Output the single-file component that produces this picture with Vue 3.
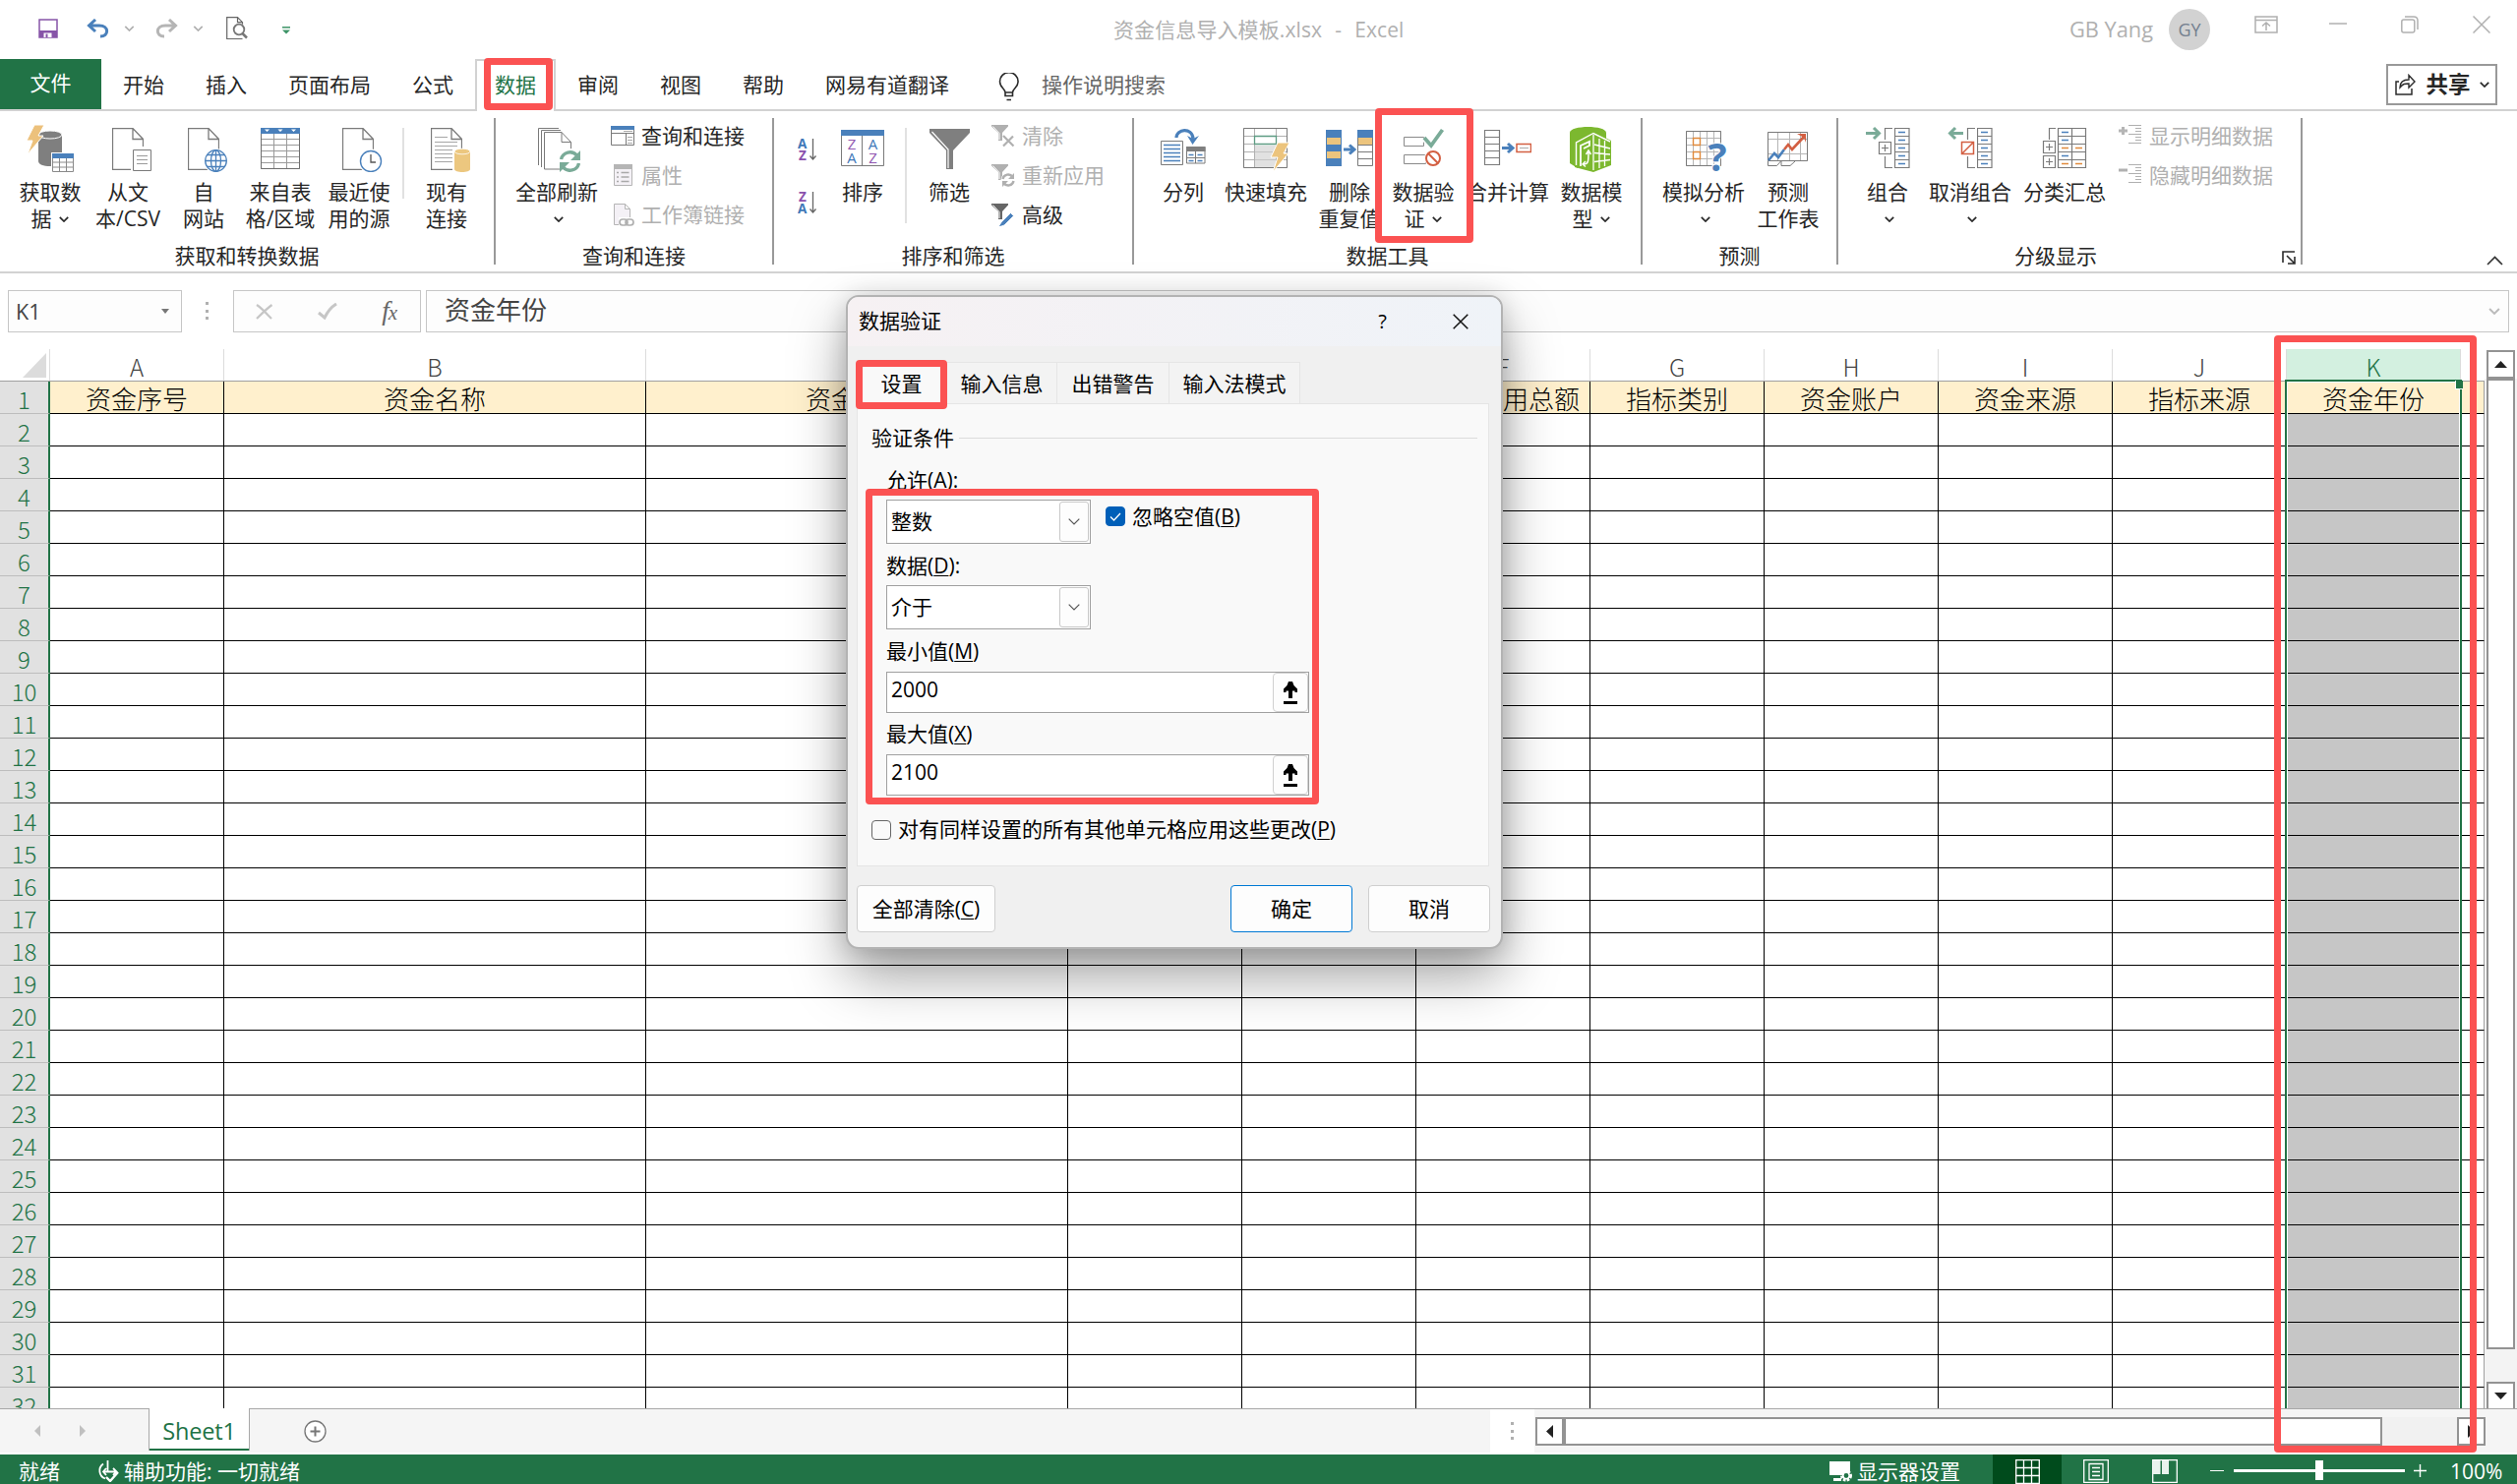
<script setup>
import { ref } from 'vue';

const tabs = ['开始', '插入', '页面布局', '公式', '数据', '审阅', '视图', '帮助', '网易有道翻译'];
const activeTab = ref('数据');

// 功能区：w 为按钮宽度，ml 为左间距
const groups = [
    {
        name: '获取和转换数据', w: 504,
        items: [
            { icon: 'getdata', lines: ['获取数', '据'], arrow: 'inline', w: 78, ml: 12 },
            { icon: 'csv', lines: ['从文', '本/CSV'], w: 80 },
            { icon: 'web', lines: ['自', '网站'], w: 74 },
            { icon: 'range', lines: ['来自表', '格/区域'], w: 82 },
            { icon: 'recent', lines: ['最近使', '用的源'], w: 78 },
            { sep: true, ml: 5, h: 72 },
            { icon: 'conn', lines: ['现有', '连接'], w: 72, ml: 7 },
        ],
    },
    {
        name: '查询和连接', w: 283,
        items: [
            { icon: 'refresh', lines: ['全部刷新'], arrow: 'below', w: 84, ml: 20 },
            {
                list: [
                    { icon: 's-query', text: '查询和连接' },
                    { icon: 's-prop', text: '属性', off: true },
                    { icon: 's-link', text: '工作簿链接', off: true },
                ],
                ml: 13,
            },
        ],
    },
    {
        name: '排序和筛选', w: 366,
        items: [
            { az: true, ml: 24, w: 20 },
            { icon: 'sort', lines: ['排序'], w: 44, ml: 24 },
            { sep: true, ml: 21, h: 97 },
            { icon: 'filter', lines: ['筛选'], w: 46, ml: 20 },
            {
                list: [
                    { icon: 's-clear', text: '清除', off: true },
                    { icon: 's-reapply', text: '重新应用', off: true },
                    { icon: 's-adv', text: '高级' },
                ],
                ml: 20,
            },
        ],
    },
    {
        name: '数据工具', w: 517,
        items: [
            { icon: 'split', lines: ['分列'], w: 90, ml: 5 },
            { icon: 'flash', lines: ['快速填充'], w: 78 },
            { icon: 'dup', lines: ['删除', '重复值'], w: 84, ml: 4 },
            { icon: 'valid', lines: ['数据验', '证'], arrow: 'inline', w: 66 },
            { icon: 'merge', lines: ['合并计算'], w: 84, ml: 11 },
            { icon: 'model', lines: ['数据模', '型'], arrow: 'inline', w: 64, ml: 11 },
        ],
    },
    {
        name: '预测', w: 199,
        items: [
            { icon: 'whatif', lines: ['模拟分析'], arrow: 'below', w: 84, ml: 20 },
            { icon: 'forecast', lines: ['预测', '工作表'], w: 62, ml: 13 },
        ],
    },
    {
        name: '分级显示', w: 472, launcher: true,
        items: [
            { icon: 'group', lines: ['组合'], arrow: 'below', w: 44, ml: 28 },
            { icon: 'ungroup', lines: ['取消组合'], arrow: 'below', w: 84, ml: 20 },
            { icon: 'subtotal', lines: ['分类汇总'], w: 84, ml: 12 },
            {
                list: [
                    { icon: 's-show', text: '显示明细数据', off: true },
                    { icon: 's-hide', text: '隐藏明细数据', off: true },
                ],
                ml: 13,
            },
        ],
    },
];

// 表格列
const columns = [
    { key: 'A', title: '资金序号', w: 177 },
    { key: 'B', title: '资金名称', w: 429 },
    { key: 'C', title: '资金性质', w: 429 },
    { key: 'D', title: '', w: 177 },
    { key: 'E', title: '', w: 177 },
    { key: 'F', title: '指标可用总额', w: 177 },
    { key: 'G', title: '指标类别', w: 177 },
    { key: 'H', title: '资金账户', w: 177 },
    { key: 'I', title: '资金来源', w: 177 },
    { key: 'J', title: '指标来源', w: 177 },
    { key: 'K', title: '资金年份', w: 177 },
    { key: '', title: '', w: 24 },
];
const selected = ref('K');
const rowCount = 32;

// 对话框
const dialogTabs = [
    { name: '设置', w: 92 },
    { name: '输入信息', w: 112 },
    { name: '出错警告', w: 114 },
    { name: '输入法模式', w: 133 },
];
const minValue = ref('2000');
const maxValue = ref('2100');
</script>

<template>
    <div class="excel">
        <!-- 图标定义 -->
        <svg class="defs" width="0" height="0">
            <symbol id="chev" viewBox="0 0 10 6"><path d="M.8.8 5 5 9.2.8" fill="none" stroke="currentColor" stroke-width="1.7" /></symbol>
            <symbol id="page" viewBox="0 0 32 43"><path d="M.5.5H21L31.500 11.500V42.500H.5ZM21 .5V11.500H31.500" fill="#fff" stroke="#7a7a7a" stroke-width="1.300" /></symbol>
            <symbol id="getdata" viewBox="0 0 48 48">
                <path d="M12 10v27c0 3 5 5 12 5s12-2 12-5V10z" fill="#7f7f7f" />
                <ellipse cx="24" cy="10" rx="12" ry="4" fill="#7f7f7f" stroke="#fff" stroke-width="1" />
                <path d="M8 0h10l-6 11h5L1 30l5-14H0z" fill="#ecc17c" stroke="#fff" stroke-width="1" />
                <path d="M25 28h23v20H25z" fill="#fff" />
                <path d="M26.500 29.500h21v18h-21zM26.500 38h21M26.500 43h21M33.500 33v14M40.500 33v14" fill="none" stroke="#8a8a8a" />
                <path d="M26 29h22v5H26z" fill="#4a80bb" />
            </symbol>
            <symbol id="csv" viewBox="0 0 48 48">
                <use href="#page" x="8" y="3" width="32" height="43" />
                <path d="M27 22h21v26H27z" fill="#fff" />
                <path d="M29.500 25.500h18v21h-18z" fill="#fff" stroke="#7a7a7a" />
                <path d="M33 31.500h11M33 35.500h11M33 39.500h11" stroke="#9a9a9a" />
            </symbol>
            <symbol id="web" viewBox="0 0 48 48">
                <use href="#page" x="8" y="3" width="32" height="43" />
                <circle cx="36.500" cy="36.500" r="12.500" fill="#fff" />
                <g fill="none" stroke="#4a80bb" stroke-width="1.300">
                    <circle cx="36.500" cy="36.500" r="10.800" />
                    <ellipse cx="36.500" cy="36.500" rx="5" ry="10.800" />
                    <path d="M25.700 36.500h21.600M36.500 26v21M28 30.500h17M28 42.500h17" />
                </g>
            </symbol>
            <symbol id="range" viewBox="0 0 48 48">
                <path d="M4.500 3.500h39v41h-39zM4 14.500h40M4 20.500h40M4 26.500h40M4 32.500h40M4 38.500h40M17.500 8v37M30.500 8v37" fill="#fff" stroke="#9a9a9a" />
                <path d="M4.500 8v36.500h39V8" fill="none" stroke="#6f6f6f" />
                <path d="M4 3h40v6H4z" fill="#4a80bb" />
                <path d="M8 4.500h5L10.500 7zM21.500 4.500h5L24 7zM35 4.500h5L37.500 7z" fill="#fff" />
            </symbol>
            <symbol id="recent" viewBox="0 0 48 48">
                <use href="#page" x="7" y="3" width="32" height="43" />
                <circle cx="36" cy="37" r="12.500" fill="#fff" />
                <circle cx="36" cy="37" r="10.500" fill="#fff" stroke="#4a80bb" stroke-width="1.400" />
                <path d="M36 30v8h5" fill="none" stroke="#555" stroke-width="1.300" />
            </symbol>
            <symbol id="conn" viewBox="0 0 48 48">
                <use href="#page" x="8" y="3" width="32" height="43" />
                <path d="M12 12.500h13M12 17.500h23M12 21.500h23M12 25.500h19M12 29.500h18M12 33.500h18M12 37.500h18" stroke="#a6a6a6" />
                <path d="M30 24h18v24H30z" fill="#fff" />
                <path d="M32 27v18c0 4 16 4 16 0V27z" fill="#ecc77f" />
                <ellipse cx="40" cy="27" rx="8" ry="2.800" fill="#ecc77f" stroke="#fff" stroke-width=".8" />
            </symbol>
            <symbol id="refresh" viewBox="0 0 48 48">
                <path d="M5.500 41V3.500H26M8.500 43V5.500H28" fill="none" stroke="#7a7a7a" />
                <path d="M11.500 7.500H29L38.500 17.500V45H11.500ZM29 7.500V17.500H38.500" fill="#fff" stroke="#7a7a7a" />
                <circle cx="37.500" cy="37" r="13" fill="#fff" />
                <path d="M28.500 35a9.200 9.200 0 0 1 16-4M46.500 39a9.200 9.200 0 0 1-16 4" fill="none" stroke="#7aab98" stroke-width="3.400" />
                <path d="M48 26v10H38zM27 48V38h10z" fill="#7aab98" />
            </symbol>
            <symbol id="sort" viewBox="0 0 48 48">
                <path d="M2.500 6.500h43v35h-43zM23.500 8v34" fill="#fff" stroke="#7a7a7a" />
                <path d="M2 5h44v6H2z" fill="#4a80bb" />
                <g font-family="Open Sans, sans-serif" font-size="15" text-anchor="middle">
                    <text x="13" y="25" fill="#9159b1">Z</text><text x="13" y="38.500" fill="#3f78b8">A</text>
                    <text x="34.500" y="25" fill="#3f78b8">A</text><text x="34.500" y="38.500" fill="#9159b1">Z</text>
                </g>
            </symbol>
            <symbol id="az" viewBox="0 0 20 24">
                <g font-family="Open Sans, sans-serif" font-size="13.500" font-weight="700"><text x="0" y="10.500" fill="#3f78b8">A</text><text x="1" y="23" fill="#8a51ad">Z</text></g>
                <path d="M15.500 1v21M12.500 18.500l3 3.500 3-3.500" fill="none" stroke="#666" stroke-width="1.300" />
            </symbol>
            <symbol id="za" viewBox="0 0 20 24">
                <g font-family="Open Sans, sans-serif" font-size="13.500" font-weight="700"><text x="1" y="10.500" fill="#8a51ad">Z</text><text x="0" y="23" fill="#3f78b8">A</text></g>
                <path d="M15.500 1v21M12.500 18.500l3 3.500 3-3.500" fill="none" stroke="#666" stroke-width="1.300" />
            </symbol>
            <symbol id="filter" viewBox="0 0 48 48">
                <path d="M4 4h41v4L28 26v19h-7V26L4 8z" fill="#7f7f7f" />
                <path d="M6.500 7 23 25v19" fill="none" stroke="#fff" stroke-width="1.200" />
            </symbol>
            <symbol id="split" viewBox="0 0 48 48">
                <path d="M1.500 16.500h22v24h-22z" fill="#fff" stroke="#7a7a7a" />
                <path d="M4 20.500h17M4 24.500h17M4 28.500h17M4 32.500h17M4 36.500h17" stroke="#4a80bb" stroke-width="1.300" />
                <path d="M27.500 22.500h18.500v16.500h-18.500zM36.500 27v12M28 33.500h18" fill="#fff" stroke="#7a7a7a" />
                <path d="M27 22h19.500v5H27z" fill="#7f7f7f" />
                <path d="M29.500 30.500h5M38.500 30.500h5M29.500 36.500h5M38.500 36.500h5" stroke="#4a80bb" stroke-width="1.300" />
                <path d="M17 13c0-9 16-11 17 1" fill="none" stroke="#4a80bb" stroke-width="3.200" />
                <path d="M28 11l5.500 9L40 11l-6 3z" fill="#4a80bb" />
            </symbol>
            <symbol id="flash" viewBox="0 0 48 48">
                <path d="M1.500 3.500h44v40h-44zM1 11.500h44M1 19.500h44M1 27.500h44M1 35.500h44M12.500 3v40M34.500 3v40" fill="#fff" stroke="#b0b0b0" />
                <path d="M13 21h21v22H13z" fill="#e1e1e1" /><path d="M13 27.500h21M13 35.500h21" stroke="#c4c4c4" />
                <path d="M1.500 3.500h44v40h-44z" fill="none" stroke="#7a7a7a" />
                <path d="M12.500 11.500h22v8h-22z" fill="#fff" stroke="#5d9c83" stroke-width="1.300" />
                <path d="M36 18h12l-6 11h5L31 48l5-15h-7z" fill="#ecc47d" stroke="#fff" />
            </symbol>
            <symbol id="dup" viewBox="0 0 48 48">
                <path d="M0 5h16v37H0z" fill="#4a80bb" /><path d="M1 13h14v7H1zM1 27h14v7H1z" fill="#ecc47d" />
                <path d="M32.500 12.500h15v29h-15zM32 20.500h16M32 27.500h16M32 34.500h16" fill="#fff" stroke="#7a7a7a" />
                <path d="M32 5h16v8H32z" fill="#4a80bb" /><path d="M33 13h14v7H33z" fill="#ecc47d" />
                <path d="M18 25h10M24 20.500l5 4.500-5 4.500" fill="none" stroke="#4a80bb" stroke-width="3" />
            </symbol>
            <symbol id="valid" viewBox="0 0 48 48">
                <path d="M4.500 12.500h20v9h-20zM4.500 30.500h22v9h-22z" fill="#fff" stroke="#8a8a8a" />
                <path d="M25 13l7 8L43.500 5" fill="none" stroke="#fff" stroke-width="7" />
                <path d="M25 13l7 8L43.500 5" fill="none" stroke="#7aab98" stroke-width="3.800" />
                <circle cx="34" cy="34" r="9" fill="#fff" />
                <circle cx="34" cy="34" r="7" fill="none" stroke="#d35f42" stroke-width="2" />
                <path d="M29 29l10 10" stroke="#d35f42" stroke-width="2" />
            </symbol>
            <symbol id="merge" viewBox="0 0 48 48">
                <path d="M.5 5.500h15v35H.5zM0 12.500h16M0 19.500h16M0 26.500h16M0 33.500h16" fill="#fff" stroke="#7a7a7a" stroke-width="1.200" />
                <path d="M18 23.500h10M24 19l5 4.500-5 4.500" fill="none" stroke="#4a80bb" stroke-width="3" />
                <path d="M33 19.500h14.500v8H33z" fill="#fff" stroke="#d35f42" stroke-width="1.500" /><path d="M36 23.500h9" stroke="#aaa" />
            </symbol>
            <symbol id="model" viewBox="0 0 48 48">
                <path d="M2 8c0-8 37-8 37 0v9H10v27l-8-5z" fill="#7cb82f" />
                <path d="M7 16 26 7l18 9v25l-18 7L7 43z" fill="#7cb82f" />
                <path d="M8.500 41V18L26 8.500l17 8.500" fill="none" stroke="#fff" stroke-width="1.400" />
                <path d="M26 10v36M27 20l16 4M27 28.500l16 1.500M27 37.500l16-2M32 14v30M37.500 16v26" fill="none" stroke="#fff" stroke-width="1.300" />
                <path d="M13 42V21l9-4v4l-6 3" fill="none" stroke="#fff" stroke-width="1.800" />
                <path d="M16 40c5 0 5-3 5-13M18.500 30l2.500-4 2.500 4M18 37l-3 3 3 2.500" fill="none" stroke="#fff" stroke-width="1.500" />
            </symbol>
            <symbol id="whatif" viewBox="0 0 48 48">
                <path d="M6.500 6.500h35v35h-35zM13.500 6v35M20.500 6v35M27.500 6v35M34.500 6v35M6 13.500h35M6 20.500h35M6 27.500h35M6 34.500h35" fill="#fff" stroke="#b5b5b5" />
                <path d="M6.500 6.500h35v35h-35z" fill="none" stroke="#7a7a7a" />
                <path d="M13.500 13.500h7v7h-7zM13.500 27.500h7v7h-7z" fill="#fff" stroke="#e08a3c" stroke-width="1.400" />
                <text x="38" y="47" text-anchor="middle" font-family="Open Sans, sans-serif" font-size="40" font-weight="700" fill="#4a80bb" stroke="#fff" stroke-width="2" paint-order="stroke">?</text>
            </symbol>
            <symbol id="forecast" viewBox="0 0 48 48">
                <path d="M3.500 7.500h40v29h-40zM13.500 7v29M25.500 7v29M36.500 7v29M3 14.500h40M3 29.500h40" fill="#fff" stroke="#b5b5b5" />
                <path d="M3.500 7.500h40v29h-40zM3.500 37v4.500h9l4-4.500M17 37v4.500h9l5-4.500" fill="none" stroke="#7a7a7a" />
                <path d="M4 36l6-7 4 4 6-8" fill="none" stroke="#4a80bb" stroke-width="2.600" />
                <path d="M20 25l4-5 4 5L41 11" fill="none" stroke="#d35f42" stroke-width="2.600" /><path d="M33 9h9v9l-2-5z" fill="#d35f42" />
            </symbol>
            <symbol id="rows" viewBox="0 0 16 42">
                <path d="M.5.5h14.500v40H.5zM0 8.500h15M0 16.500h15M0 24.500h15M0 32.500h15" fill="#fff" stroke="#7a7a7a" stroke-width="1.200" />
                <path d="M4 4.500h7M4 12.500h7M4 20.500h7M4 28.500h7M4 36.500h7" stroke="#4a80bb" stroke-width="1.400" />
            </symbol>
            <symbol id="group" viewBox="0 0 48 48">
                <path d="M2 8.500h13M10 3l5.500 5.500L10 14" fill="none" stroke="#7aab98" stroke-width="3" />
                <path d="M29 3.500h-7.500V15M21.500 32v11.500H29M15.500 17.500h12v12h-12zM21.500 20v7M18 23.500h7" fill="none" stroke="#7a7a7a" stroke-width="1.200" />
                <use href="#rows" x="31" y="3" width="16" height="42" />
            </symbol>
            <symbol id="ungroup" viewBox="0 0 48 48">
                <path d="M17 8.500H4M9 3 3.500 8.500 9 14" fill="none" stroke="#7aab98" stroke-width="3" />
                <path d="M29 3.500h-7.500V15M21.500 32v11.500H29" fill="none" stroke="#7a7a7a" stroke-width="1.200" />
                <path d="M15.500 17.500h12v12h-12zM16 29l11-11" fill="none" stroke="#d35f42" stroke-width="1.500" />
                <use href="#rows" x="31" y="3" width="16" height="42" />
            </symbol>
            <symbol id="subtotal" viewBox="0 0 48 48">
                <path d="M15 3.500H8.500V15M2.500 16.500h12v12h-12zM8.500 19v7M5 22.500h7M2.500 31.500h12v12h-12zM8.500 34v7M5 37.500h7" fill="none" stroke="#7a7a7a" stroke-width="1.200" />
                <path d="M17.500 3.500h28v40h-28zM31.500 3v40M17 11.500h28M17 19.500h28M17 27.500h28M17 35.500h28" fill="#fff" stroke="#7a7a7a" stroke-width="1.200" />
                <path d="M21 7.500h7M21 15.500h7M21 31.500h7" stroke="#4a80bb" stroke-width="1.400" />
                <path d="M21 23.500h7M21 39.500h7M35 23.500h7M35 39.500h7" stroke="#e08a3c" stroke-width="1.400" />
            </symbol>
            <symbol id="s-query" viewBox="0 0 24 24">
                <path d="M.5 2.500h23v19H.5zM15.500 10v12M0 9.500h24" fill="#fff" stroke="#7a7a7a" /><path d="M17 13.500h5M17 16.500h5M17 19.500h5M13 7.500h9" stroke="#aaa" /><path d="M0 2h24v4H0z" fill="#4a80bb" />
            </symbol>
            <symbol id="s-prop" viewBox="0 0 24 24">
                <path d="M3.500 1.500h18v21h-18z" fill="#f4f1f6" stroke="#b5b5b5" /><path d="M3 1h19v5H3z" fill="#b5b5b5" /><path d="M6 9.500h2M6 14h2M6 18.500h2M10.500 9.500h8M10.500 14h8M10.500 18.500h8" stroke="#a9a9a9" stroke-width="1.600" />
            </symbol>
            <symbol id="s-link" viewBox="0 0 24 24">
                <path d="M3.500 1.500h11l5 5v16h-16zM14.500 1.500v5h5" fill="#f4f1f6" stroke="#b5b5b5" /><path d="M8 15h16v9H8z" fill="#fff" /><rect x="9" y="17" width="8" height="6" rx="3" fill="none" stroke="#b0b0b0" stroke-width="1.700" /><rect x="15" y="17" width="8" height="6" rx="3" fill="none" stroke="#b0b0b0" stroke-width="1.700" />
            </symbol>
            <symbol id="s-clear" viewBox="0 0 24 24">
                <path d="M0 1h17v1.500L11 9v8H7V9L0 2.500z" fill="#b0b0b0" /><path d="M1.500 2.500 8 9.500V16" stroke="#fff" fill="none" /><path d="m12 12 10.500 10.500M22 12.500 12 22.500" stroke="#b0b0b0" stroke-width="2.200" />
            </symbol>
            <symbol id="s-reapply" viewBox="0 0 24 24">
                <path d="M0 1h17v1.500L11 9v8H7V9L0 2.500z" fill="#b0b0b0" /><path d="M1.500 2.500 8 9.500V16" stroke="#fff" fill="none" /><circle cx="17" cy="17" r="7.500" fill="#fff" /><path d="M11.500 16a5.500 5.500 0 0 1 10-2M22.500 18a5.500 5.500 0 0 1-10 2" fill="none" stroke="#b0b0b0" stroke-width="2.400" /><path d="M23 10v6h-6zM11 24v-6h6z" fill="#b0b0b0" />
            </symbol>
            <symbol id="s-adv" viewBox="0 0 24 24">
                <path d="M0 1h17v1.500L11 9v8H7V9L0 2.500z" fill="#666" /><path d="M1.500 2.500 8 9.500V16" stroke="#fff" fill="none" /><path d="m10 20 9.500-9.500 3 3L13 23l-6 2z" fill="#4a80bb" stroke="#fff" stroke-width=".8" />
            </symbol>
            <symbol id="s-show" viewBox="0 0 24 24">
                <path d="M4.500 3v8M0 7h9" stroke="#b5b5b5" stroke-width="3" /><path d="M10 1.500h13M17 4.500h6M17 7.500h6M10 10.500h13M17 13.500h6M17 16.500h6M10 19.500h13" stroke="#b0b0b0" />
            </symbol>
            <symbol id="s-hide" viewBox="0 0 24 24">
                <path d="M0 7h9" stroke="#b0b0b0" stroke-width="3" /><path d="M10 1.500h13M17 4.500h6M17 7.500h6M10 10.500h13M17 13.500h6M17 16.500h6M10 19.500h13" stroke="#b0b0b0" />
            </symbol>
        </svg>

        <!-- 标题栏 -->
        <header class="titlebar">
            <div class="quick">
                <svg class="q-save" width="20" height="20" viewBox="0 0 20 20"><path d="M1 1h18v18H1z" fill="#fff" stroke="#8754a8" stroke-width="1.500" /><path d="M1 12h18v7H1z" fill="#8754a8" /><path d="M5.500 14.500h8V19h-8z" fill="#fff" /><path d="M7.500 15.500h2V19h-2z" fill="#8754a8" /></svg>
                <svg class="q-undo" width="23" height="20" viewBox="0 0 23 20"><path d="M9 1 2.500 7 9 13M3 7h10c10 0 10 11 1 11" fill="none" stroke="#4a80bb" stroke-width="3" /></svg>
                <svg class="q-chev grey" width="11" height="6"><use href="#chev" /></svg>
                <svg class="q-redo" width="23" height="20" viewBox="0 0 23 20"><path d="m14 1 6.500 6L14 13M20 7H10C0 7 0 18 9 18" fill="none" stroke="#b5b5b5" stroke-width="3" /></svg>
                <svg class="q-chev grey" width="11" height="6"><use href="#chev" /></svg>
                <svg class="q-prev" width="22" height="24" viewBox="0 0 22 24"><path d="M16.500 22.500H.7V.7h10.800l5 5v2M11.500.7v5h5" fill="none" stroke="#666" stroke-width="1.200" /><circle cx="13" cy="13" r="5.300" fill="#fff" stroke="#777" stroke-width="1.800" /><path d="m16.500 17 4.500 4.500" stroke="#777" stroke-width="2.500" /></svg>
                <svg class="q-more" width="8" height="8" viewBox="0 0 8 8"><path d="M0 .8h8" stroke="#3d9467" stroke-width="1.500" /><path d="M0 3.500h8L4 7.500z" fill="#3d9467" /></svg>
            </div>
            <div class="doc-title">资金信息导入模板.xlsx&nbsp; -&nbsp; Excel</div>
            <div class="account">
                <span class="user">GB Yang</span>
                <span class="avatar">GY</span>
                <svg class="w-rib" width="24" height="18" viewBox="0 0 24 18"><path d="M1 1h22v16H1zM1 4.500h22M12 15V7M8 10.500 12 7l4 3.500" fill="none" stroke="#b0b0b0" stroke-width="1.500" /></svg>
                <svg class="w-min" width="18" height="18" viewBox="0 0 18 18"><path d="M0 8h18" stroke="#b0b0b0" stroke-width="1.500" /></svg>
                <svg class="w-max" width="18" height="18" viewBox="0 0 18 18"><rect x=".8" y="4" width="13" height="13" rx="2" fill="none" stroke="#b0b0b0" stroke-width="1.500" /><path d="M4 1h9q4 0 4 4v9" fill="none" stroke="#b0b0b0" stroke-width="1.500" /></svg>
                <svg class="w-close" width="18" height="18" viewBox="0 0 18 18"><path d="m.5.500 17 17m0-17-17 17" stroke="#b0b0b0" stroke-width="1.500" /></svg>
            </div>
        </header>

        <!-- 选项卡 -->
        <nav class="tabs">
            <div class="file">文件</div>
            <div v-for="t in tabs" :key="t" class="tab" :class="{ active: t === activeTab }">{{ t }}</div>
            <svg class="bulb" width="22" height="30" viewBox="0 0 22 30"><path d="M7 20c0-4-5.500-5-5.500-11a9.300 9.300 0 0 1 18.600 0c0 6-5.600 7-5.600 11v3.500H7zM7 20h7.500M8.500 27.500H13" fill="none" stroke="#2b2b2b" stroke-width="1.600" /></svg>
            <span class="tell">操作说明搜索</span>
            <div class="share">
                <svg width="22" height="22" viewBox="0 0 22 22"><path d="M4 8H1v13h16v-6" fill="none" stroke="#2b2b2b" stroke-width="1.500" /><path d="M5 14c0-6 4-8 9-8V1.500L20 8l-6 6v-4c-4 0-6 0-9 4z" fill="none" stroke="#2b2b2b" stroke-width="1.400" /></svg>
                <b>共享</b>
                <svg width="10" height="6"><use href="#chev" /></svg>
            </div>
        </nav>

        <!-- 功能区 -->
        <section class="ribbon">
            <div v-for="g in groups" :key="g.name" class="group" :style="{ width: g.w + 'px' }">
                <div class="group-body">
                    <template v-for="(it, i) in g.items" :key="i">
                        <div v-if="it.sep" class="thin" :style="{ marginLeft: it.ml + 'px', height: it.h + 'px' }"></div>
                        <div v-else-if="it.az" class="azcol" :style="{ marginLeft: it.ml + 'px', width: it.w + 'px' }">
                            <svg width="20" height="24"><use href="#az" /></svg>
                            <svg width="20" height="24"><use href="#za" /></svg>
                        </div>
                        <div v-else-if="it.list" class="list" :style="{ marginLeft: it.ml + 'px' }">
                            <div v-for="s in it.list" :key="s.text" class="small" :class="{ off: s.off }">
                                <svg width="24" height="24"><use :href="'#' + s.icon" /></svg>
                                <span>{{ s.text }}</span>
                            </div>
                        </div>
                        <div v-else class="big" :style="{ marginLeft: (it.ml || 0) + 'px', width: it.w + 'px' }">
                            <svg class="ico" width="48" height="48"><use :href="'#' + it.icon" /></svg>
                            <div v-for="(l, n) in it.lines" :key="n" class="line">
                                <span>{{ l }}</span>
                                <svg v-if="it.arrow === 'inline' && n === 1" class="arr" width="10" height="6"><use href="#chev" /></svg>
                            </div>
                            <div v-if="it.arrow === 'below'" class="line below"><svg width="10" height="6"><use href="#chev" /></svg></div>
                        </div>
                    </template>
                </div>
                <div class="group-name" :class="{ launch: g.launcher }">
                    {{ g.name }}
                    <svg v-if="g.launcher" class="launcher" width="14" height="14" viewBox="0 0 14 14"><path d="M1 12V1h12M5 5l7.500 7.500M13 6v7H6" fill="none" stroke="#2b2b2b" stroke-width="1.600" /></svg>
                </div>
            </div>
            <svg class="collapse" width="17" height="10" viewBox="0 0 17 10"><path d="m1 9 7.500-7.500L16 9" fill="none" stroke="#333" stroke-width="1.600" /></svg>
        </section>

        <!-- 编辑栏 -->
        <section class="formula">
            <div class="namebox"><span>K1</span><svg width="8" height="5" viewBox="0 0 8 5"><path d="M0 0h8L4 5z" fill="#777" /></svg></div>
            <div class="dots"><i></i><i></i><i></i></div>
            <div class="fxbox">
                <svg width="18" height="16" viewBox="0 0 18 16"><path d="M1 1c6 4 11 10 15 14M16.500 1C11 5 6 10 1 15" fill="none" stroke="#c6c6c6" stroke-width="2.200" /></svg>
                <svg width="20" height="17" viewBox="0 0 20 17"><path d="m1 10 6 5C10 9 14 4 19 1" fill="none" stroke="#c6c6c6" stroke-width="3" /></svg>
                <span class="fx">f<small>x</small></span>
            </div>
            <div class="fbar"><span>资金年份</span><svg width="12" height="7"><use href="#chev" /></svg></div>
        </section>

        <!-- 工作表 -->
        <section class="work">
            <div class="sheet">
                <div class="colheads">
                    <div class="corner"><svg width="24" height="25" viewBox="0 0 24 25"><path d="M24 0v25H0z" fill="#dcdcdc" /></svg></div>
                    <div v-for="c in columns" :key="c.key" class="colhead" :class="{ on: c.key === selected }" :style="{ width: c.w + 'px' }">{{ c.key }}</div>
                </div>
                <div v-for="r in rowCount" :key="r" class="row">
                    <div class="rowhead">{{ r }}</div>
                    <div v-for="c in columns" :key="c.key" class="cell" :class="{ head: r === 1, sel: c.key === selected && r > 1, last: !c.key }" :style="{ width: c.w + 'px' }">{{ r === 1 ? c.title : '' }}</div>
                </div>
                <div class="selection"><i></i></div>
            </div>
            <div class="vscroll">
                <div class="sbtn"><svg width="13" height="7" viewBox="0 0 13 7"><path d="M6.500 0 13 7H0z" fill="#222" /></svg></div>
                <div class="vthumb"></div>
                <div class="vtrack"></div>
                <div class="sbtn"><svg width="13" height="7" viewBox="0 0 13 7"><path d="M6.500 7 13 0H0z" fill="#222" /></svg></div>
            </div>
        </section>

        <!-- 工作表标签 -->
        <section class="sheetbar">
            <svg class="nav1" width="6" height="12" viewBox="0 0 6 12"><path d="M6 0v12L0 6z" fill="#c0c0c0" /></svg>
            <svg class="nav2" width="6" height="12" viewBox="0 0 6 12"><path d="M0 0v12l6-6z" fill="#c0c0c0" /></svg>
            <div class="stab">Sheet1</div>
            <svg class="plus" width="23" height="23" viewBox="0 0 23 23"><circle cx="11.500" cy="11.500" r="10.500" fill="#fff" stroke="#777" stroke-width="1.300" /><path d="M11.500 6.500v10M6.500 11.500h10" stroke="#777" stroke-width="2" /></svg>
            <div class="handle"><i></i><i></i><i></i></div>
            <div class="hscroll">
                <div class="hbtn"><svg width="7" height="13" viewBox="0 0 7 13"><path d="M7 0v13L0 6.500z" fill="#222" /></svg></div>
                <div class="hthumb"></div>
                <div class="htrack"></div>
                <div class="hbtn"><svg width="7" height="13" viewBox="0 0 7 13"><path d="M0 0v13l7-6.500z" fill="#222" /></svg></div>
            </div>
        </section>

        <!-- 状态栏 -->
        <footer class="status">
            <span class="ready">就绪</span>
            <svg class="acc" width="22" height="22" viewBox="0 0 22 22"><path d="M6 3.500a8.500 8.500 0 0 0 2 15M10.500 0v11M6 11.500h13M9 8l-3 3.500L9 15M16 8l3.500 3.500L16 15" fill="none" stroke="#fff" stroke-width="1.800" /><path d="m9 17 4 4 8-9" fill="none" stroke="#fff" stroke-width="2.400" /></svg>
            <span class="acc-text">辅助功能: 一切就绪</span>
            <svg class="disp" width="24" height="22" viewBox="0 0 24 22"><path d="M0 1h21v10l-6 4H0zM4 18h8v3H4z" fill="#fff" /><circle cx="17" cy="15.500" r="4.500" fill="none" stroke="#fff" stroke-width="3" stroke-dasharray="2.500 1.200" /><circle cx="17" cy="15.500" r="3.200" fill="#217346" stroke="#fff" stroke-width="1.600" /></svg>
            <span class="disp-text">显示器设置</span>
            <div class="view on"><svg width="25" height="25" viewBox="0 0 25 25"><path d="M.7.7h23.600v23.600H.7zM8.500 0v25M16.500 0v25M0 8.500h25M0 16.500h25" fill="none" stroke="#fff" stroke-width="1.300" /></svg></div>
            <div class="view"><svg width="26" height="24" viewBox="0 0 26 24"><path d="M.7.7h24.600v22.600H.7zM6 4.500h14v16H6zM9 8.500h8M9 12.500h8M9 16.500h8" fill="none" stroke="#fff" stroke-width="1.300" /></svg></div>
            <div class="view"><svg width="26" height="24" viewBox="0 0 26 24"><path d="M.7.7h24.600v22.600H.7z" fill="#217346" stroke="#fff" stroke-width="1.300" /><path d="M1 1h7.500v14H1zM10 1h7v14h-7z" fill="#e9f3ed" /></svg></div>
            <div class="zoom">
                <i class="minus"></i>
                <div class="track"><b></b></div>
                <svg width="13" height="13" viewBox="0 0 13 13"><path d="M6.500 0v13M0 6.500h13" stroke="#fff" stroke-width="1.400" /></svg>
            </div>
            <span class="pct">100%</span>
        </footer>

        <!-- 数据验证对话框 -->
        <div class="dialog">
            <div class="dlg-title">
                <span>数据验证</span>
                <span class="help">?</span>
                <svg width="16" height="16" viewBox="0 0 16 16"><path d="m.7.700 14.600 14.600m0-14.600L.7 15.300" stroke="#111" stroke-width="1.500" /></svg>
            </div>
            <div class="dlg-tabs">
                <div v-for="(t, i) in dialogTabs" :key="t.name" class="dlg-tab" :class="{ cur: i === 0 }" :style="{ width: t.w + 'px' }">{{ t.name }}</div>
            </div>
            <div class="panel">
                <div class="legend"><span>验证条件</span><hr /></div>
                <label class="lab lab-a">允许(<u>A</u>):</label>
                <div class="line-allow">
                    <div class="combo"><span>整数</span><div class="drop"><svg width="12" height="7" viewBox="0 0 12 7"><path d="m.700.7 5.300 5.300L11.300.7" fill="none" stroke="#555" stroke-width="1.200" /></svg></div></div>
                    <div class="check on"><svg width="12" height="9" viewBox="0 0 12 9"><path d="m1 4.500 3.500 3.500L11 1" fill="none" stroke="#fff" stroke-width="1.300" /></svg></div>
                    <span class="ignore">忽略空值(<u>B</u>)</span>
                </div>
                <label class="lab lab-d">数据(<u>D</u>):</label>
                <div class="combo"><span>介于</span><div class="drop"><svg width="12" height="7" viewBox="0 0 12 7"><path d="m.700.7 5.300 5.300L11.300.7" fill="none" stroke="#555" stroke-width="1.200" /></svg></div></div>
                <label class="lab lab-m">最小值(<u>M</u>)</label>
                <div class="input"><span>{{ minValue }}</span><div class="pick"><svg width="14" height="23" viewBox="0 0 14 23"><path d="M5 0h4l1.500 4L14 7.500V11h-2.500V9.500H9V17H5V9.500H2.500V11H0V7.500L3.500 4zM0 20h14v3H0z" /></svg></div></div>
                <label class="lab lab-x">最大值(<u>X</u>)</label>
                <div class="input"><span>{{ maxValue }}</span><div class="pick"><svg width="14" height="23" viewBox="0 0 14 23"><path d="M5 0h4l1.500 4L14 7.500V11h-2.500V9.500H9V17H5V9.500H2.500V11H0V7.500L3.500 4zM0 20h14v3H0z" /></svg></div></div>
                <div class="apply"><div class="check"></div><span>对有同样设置的所有其他单元格应用这些更改(<u>P</u>)</span></div>
            </div>
            <div class="dlg-btns">
                <button class="clear">全部清除(<u>C</u>)</button>
                <button class="ok">确定</button>
                <button>取消</button>
            </div>
        </div>

        <!-- 红色标注框 -->
        <div class="mark mark-tab"></div>
        <div class="mark mark-valid"></div>
        <div class="mark mark-setting"></div>
        <div class="mark mark-cond"></div>
        <div class="mark mark-col"></div>
    </div>
</template>

<style>
body {
    margin: 0;
    background: #fff;
}
</style>

<style scoped>
.excel {
    position: relative;
    width: 2559px;
    height: 1509px;
    overflow: hidden;
    display: flex;
    flex-direction: column;
    background: #fff;
    color: #262626;
    font: 21px/27px 'Open Sans', 'Noto Sans CJK SC', sans-serif;
    white-space: nowrap;
}

.excel * {
    box-sizing: border-box;
}

.excel svg {
    display: block;
    flex: none;
}

.excel .defs {
    display: none;
}

/* ===== 标题栏 ===== */
.titlebar {
    height: 60px;
    flex: none;
    display: flex;
    justify-content: space-between;
    color: #b0b0b0;
}

.quick {
    display: flex;
    align-items: center;
    width: 1132px;
    padding-left: 39px;
    height: 58px;
}

.grey {
    color: #b0b0b0;
}

.q-undo {
    margin-left: 29px;
}

.q-chev {
    margin-left: 15px;
}

.q-redo {
    margin-left: 21px;
}

.q-prev {
    margin-left: 23px;
}

.q-more {
    margin: 3px 0 0 35px;
}

.doc-title {
    flex: 1;
    line-height: 60px;
    font-size: 21px;
    letter-spacing: 0.1px;
    word-spacing: 1px;
}

.account {
    display: flex;
    height: 60px;
    align-items: center;
    padding-right: 27px;
}

.user {
    font-size: 21.8px;
    line-height: 60px;
}

.avatar {
    width: 42px;
    height: 42px;
    border-radius: 50%;
    background: #d2d2d2;
    color: #74808f;
    font-size: 18px;
    line-height: 42px;
    text-align: center;
    margin: 0 45px 0 16px;
}

.w-rib,
.w-min,
.w-max,
.w-close {
    margin-top: -10px;
}

.w-min {
    margin-left: 52px;
}

.w-max {
    margin-left: 55px;
}

.w-close {
    margin-left: 55px;
}

/* ===== 选项卡 ===== */
.tabs {
    height: 53px;
    flex: none;
    display: flex;
    align-items: center;
    box-shadow: inset 0 -2px #d2d2d2;
}

.file {
    width: 103px;
    height: 51px;
    line-height: 48px;
    margin-bottom: 2px;
    text-align: center;
    background: #217346;
    color: #fff;
}

.tab {
    height: 53px;
    line-height: 52px;
    padding: 0 21px;
}

.tab:nth-child(2) {
    margin-left: 1px;
}

.tab.active {
    color: #217346;
    background: #fff;
    padding: 0 18px;
    margin: 0 1px;
    border: solid #d2d2d2;
    border-width: 2px 2px 0;
    line-height: 48px;
}

.bulb {
    margin-left: 29px;
    margin-top: 4px;
}

.tell {
    margin-left: 22px;
    color: #666;
}

.share {
    margin: -2px 20px 0 auto;
    width: 113px;
    height: 42px;
    padding: 0 6px 0 7px;
    border: 2px solid #999;
    display: flex;
    align-items: center;
    justify-content: space-between;
    font-size: 22.5px;
}

/* ===== 功能区 ===== */
.ribbon {
    height: 165px;
    flex: none;
    display: flex;
    padding-top: 7px;
    border-bottom: 2px solid #d2d2d2;
}

.group {
    height: 149px;
    flex: none;
    border-right: 2px solid #999;
    display: flex;
    flex-direction: column;
}

.group-body {
    height: 127px;
    flex: none;
    display: flex;
    align-items: flex-start;
    padding-top: 7px;
}

.group-name {
    height: 22px;
    flex: none;
    text-align: center;
    line-height: 26px;
}

.group-name.launch {
    display: flex;
    justify-content: flex-end;
    align-items: flex-start;
    padding-right: 5px;
    gap: 188px;
}

.launcher {
    margin-top: 8px;
}

.big {
    flex: none;
    display: flex;
    flex-direction: column;
    align-items: center;
}

.ico {
    margin-bottom: 7px;
    overflow: visible;
}

.line {
    height: 27px;
    line-height: 27px;
    display: flex;
    align-items: center;
    justify-content: center;
}

.arr {
    margin-left: 7px;
    margin-right: 1px;
}

.line.below {
    padding-left: 3px;
}

.thin {
    width: 2px;
    flex: none;
    margin-top: 3px;
    background: #e1e1e1;
}

.azcol {
    display: flex;
    flex-direction: column;
    gap: 30px;
    padding-top: 13px;
}

.list {
    margin-top: -9px;
}

.small {
    height: 40px;
    display: flex;
    align-items: center;
    gap: 7px;
}

.small.off {
    color: #b0b0b0;
}

.collapse {
    margin: 140px 14px 0 auto;
}

/* ===== 编辑栏 ===== */
.formula {
    height: 77px;
    flex: none;
    display: flex;
    padding: 17px 8px 16px;
    color: #444;
}

.namebox {
    width: 177px;
    height: 43px;
    border: 1px solid #c6c6c6;
    background: #fdfdfd;
    display: flex;
    align-items: center;
    justify-content: space-between;
    padding: 0 12px 0 7px;
    font-size: 21.5px;
}

.dots,
.handle {
    display: flex;
    flex-direction: column;
    justify-content: space-between;
}

.dots {
    width: 3px;
    height: 18px;
    margin: 12px 25px 0 24px;
}

.dots i,
.handle i {
    width: 3px;
    height: 3px;
    background: #b0b0b0;
}

.fxbox {
    width: 191px;
    height: 43px;
    margin-right: 5px;
    padding: 0 23px 0 22px;
    border: 1px solid #c6c6c6;
    background: #fdfdfd;
    display: flex;
    align-items: center;
    justify-content: space-between;
}

.fx {
    font: italic 27px/36px 'Liberation Serif', serif;
    color: #666;
}

.fx small {
    font-size: 21px;
    margin-left: -1px;
}

.fbar {
    flex: 1;
    height: 43px;
    border: 1px solid #c6c6c6;
    background: #fdfdfd;
    display: flex;
    align-items: center;
    justify-content: space-between;
    padding: 0 8px 0 18px;
    font-size: 26px;
    line-height: 38px;
}

.fbar span {
    height: 41px;
}

.fbar svg {
    color: #bbb;
}

/* ===== 工作表 ===== */
.work {
    height: 1077px;
    flex: none;
    display: flex;
}

.sheet {
    position: relative;
    width: 2526px;
    flex: none;
    height: 1077px;
    overflow: hidden;
    font-family: 'Noto Sans CJK SC', sans-serif;
    font-weight: 300;
    font-size: 26px;
}

.colheads {
    display: flex;
    height: 33px;
    border-bottom: 1px solid #a0a0a0;
}

.corner {
    width: 51px;
    flex: none;
    padding: 4px 0 0 23px;
    border-right: 1px solid #ddd;
}

.colhead {
    flex: none;
    text-align: center;
    line-height: 35px;
    font-size: 24px;
    color: #444;
    border-right: 1px solid #dcdcdc;
}

.colhead:last-child {
    border-right: 0;
}

.colhead.on {
    background: #d3f0e0;
    color: #217346;
}

.row {
    display: flex;
    height: 33px;
}

.rowhead {
    width: 51px;
    flex: none;
    background: #e1e1e1;
    color: #217346;
    text-align: center;
    font-size: 24px;
    line-height: 35px;
    overflow: hidden;
    border-right: 2px solid #217346;
    border-bottom: 1px solid #bdbdbd;
}

.cell {
    flex: none;
    border-right: 1px solid #000;
    border-bottom: 1px solid #000;
    text-align: center;
    line-height: 33px;
    color: #000;
}

.cell.last {
    border-right-color: #a0a0a0;
}

.cell.head {
    background: #fff0cd;
}

.cell.sel {
    background: #c6c6c6;
}

/* 选区边框 */
.selection {
    position: absolute;
    left: 2323px;
    top: 31px;
    width: 180px;
    height: 1060px;
    border: 2px solid #217346;
    box-shadow: inset 0 0 0 1px #fff;
}

.selection i {
    position: absolute;
    right: -3px;
    top: -1px;
    width: 8px;
    height: 9px;
    background: #217346;
    border: solid #fff;
    border-width: 0 0 1px 1px;
}

.vscroll {
    width: 33px;
    display: flex;
    flex-direction: column;
    padding: 1px 2px 0;
    background: linear-gradient(#fff 30px, #f3f3f3 30px);
}

.sbtn {
    height: 29px;
    flex: none;
    border: 2px solid #939393;
    background: #fff;
    display: flex;
    align-items: center;
    justify-content: center;
}

.vthumb {
    height: 987px;
    flex: none;
    border: 2px solid #939393;
    background: #fff;
}

.vtrack {
    height: 33px;
    flex: none;
}

/* ===== 工作表标签 ===== */
.sheetbar {
    height: 47px;
    flex: none;
    display: flex;
    align-items: center;
    background: #f5f5f5;
    border-top: 1px solid #a8a8a8;
    border-bottom: 2px solid #fff;
}

.nav1 {
    margin-left: 35px;
}

.nav2 {
    margin: 0 64px 0 40px;
}

.stab {
    align-self: flex-start;
    width: 103px;
    height: 43px;
    margin-top: -1px;
    background: #fff;
    border: solid #a8a8a8;
    border-width: 0 1px;
    box-shadow: inset 0 -2px #217346;
    color: #217346;
    text-align: center;
    font: 23.5px/47px 'Open Sans', sans-serif;
    letter-spacing: -0.2px;
}

.plus {
    margin-left: 55px;
}

.handle {
    margin-left: 1183px;
    width: 45px;
    height: 44px;
    padding: 13px 0 13px 21px;
    background: #fff;
}

.hscroll {
    display: flex;
    height: 29px;
    margin-left: 1px;
}

.hbtn {
    width: 29px;
    border: 2px solid #939393;
    background: #fff;
    display: flex;
    align-items: center;
    justify-content: center;
}

.hthumb {
    width: 832px;
    border: 2px solid #939393;
    background: #fff;
}

.htrack {
    width: 76px;
    background: #f1f1f1;
}

/* ===== 状态栏 ===== */
.status {
    height: 30px;
    flex: none;
    display: flex;
    align-items: center;
    background: #217346;
    color: #fff;
    line-height: 34px;
    padding: 4px 0 0 19px;
}

.acc {
    margin-left: 38px;
}

.acc-text {
    margin-left: 5px;
    width: 1734px;
}

.disp-text {
    margin-left: 4px;
    width: 138px;
}

.view {
    width: 70px;
    height: 30px;
    margin-top: -4px;
    padding-top: 5px;
    display: flex;
    justify-content: center;
    overflow: hidden;
}

.view.on {
    background: #004b1c;
}

.zoom {
    display: flex;
    align-items: center;
    margin-left: 11px;
    margin-top: -2px;
}

.minus {
    width: 14px;
    height: 1px;
    background: #fff;
}

.track {
    width: 174px;
    height: 20px;
    margin: 0 9px 0 10px;
    display: flex;
    align-items: center;
    justify-content: center;
    background: linear-gradient(#fff, #fff) center / 100% 3px no-repeat;
}

.track b {
    width: 8px;
    height: 20px;
    background: #fff;
}

.pct {
    margin-left: 24px;
}

/* ===== 对话框 ===== */
.dialog {
    position: absolute;
    left: 860px;
    top: 300px;
    width: 668px;
    height: 665px;
    display: flex;
    flex-direction: column;
    border: 2px solid #b3b3b3;
    border-radius: 13px;
    background: #f0f0f0;
    color: #000;
    box-shadow: 0 28px 56px rgba(0, 0, 0, 0.36), 0 2px 24px rgba(0, 0, 0, 0.16);
    overflow: hidden;
}

.dlg-title {
    height: 50px;
    flex: none;
    display: flex;
    align-items: center;
    padding: 0 33px 1px 11px;
    background: linear-gradient(90deg, #f6f1f3, #eff3f8);
}

.help {
    margin-left: auto;
    margin-right: 67px;
    font-size: 20px;
}

.dlg-tabs {
    height: 58px;
    flex: none;
    padding: 16px 0 0 9px;
    display: flex;
}

.dlg-tab {
    height: 42px;
    line-height: 43px;
    text-align: center;
    background: #f3f3f3;
    border: solid #e5e5e5;
    border-width: 1px 1px 0 0;
}

.dlg-tab.cur {
    background: #f9f9f9;
}

.panel {
    width: 643px;
    height: 471px;
    flex: none;
    margin-left: 9px;
    padding: 21px 11px 0 14px;
    background: #f9f9f9;
    border: 1px solid #e5e5e5;
}

.legend {
    display: flex;
    align-items: center;
    gap: 5px;
    height: 27px;
}

.legend hr {
    flex: 1;
    margin: 0;
    border: 0;
    border-top: 1px solid #dcdcdc;
}

.lab {
    display: block;
    height: 27px;
    margin-left: 15px;
}

.lab-a {
    margin-top: 16px;
    margin-bottom: 6px;
}

.lab-d {
    margin-top: 9px;
    margin-bottom: 6px;
}

.lab-m {
    margin-top: 9px;
    margin-bottom: 7px;
}

.lab-x {
    margin-top: 8px;
    margin-bottom: 7px;
}

.line-allow {
    display: flex;
    align-items: flex-start;
}

.combo {
    width: 208px;
    height: 45px;
    flex: none;
    margin-left: 15px;
    padding: 1px;
    border: 1px solid #a0a0a0;
    background: #fff;
    display: flex;
    justify-content: space-between;
    align-items: center;
}

.combo span {
    margin-left: 3px;
}

.drop {
    width: 30px;
    height: 41px;
    border: 1px solid #c8c8c8;
    border-radius: 3px;
    background: #fdfdfd;
    display: flex;
    align-items: center;
    justify-content: center;
}

.check {
    width: 20px;
    height: 20px;
    flex: none;
    border: 1px solid #666;
    border-radius: 4px;
    background: #fafafa;
    display: flex;
    align-items: center;
    justify-content: center;
}

.check.on {
    margin: 7px 0 0 15px;
    background: #005fb8;
    border-color: #005fb8;
}

.ignore {
    margin: 4px 0 0 7px;
}

.input {
    width: 430px;
    height: 42px;
    margin-left: 15px;
    border: 1px solid #a0a0a0;
    background: #fff;
    display: flex;
    justify-content: space-between;
    line-height: 34px;
    padding-left: 4px;
}

.pick {
    width: 36px;
    height: 40px;
    border: 1px solid #d0d0d0;
    border-radius: 4px;
    background: #fdfdfd;
    display: flex;
    align-items: center;
    justify-content: center;
}

.apply {
    display: flex;
    align-items: center;
    gap: 7px;
    margin-top: 21px;
}

.dlg-btns {
    display: flex;
    padding: 19px 0 0 9px;
}

.dlg-btns button {
    width: 124px;
    height: 48px;
    padding: 0;
    font: inherit;
    color: #000;
    background: #fdfdfd;
    border: 1px solid #cfcfcf;
    border-radius: 4px;
    margin-left: 16px;
}

.dlg-btns .clear {
    width: 141px;
    margin-left: 0;
}

.dlg-btns .ok {
    margin-left: 239px;
    border-color: #0078d4;
}

u {
    text-underline-offset: 2px;
    text-decoration-thickness: 1px;
}

/* ===== 标注 ===== */
.mark {
    position: absolute;
    border: 7px solid #fb5252;
    border-radius: 4px;
}

.mark-tab {
    left: 492px;
    top: 59px;
    width: 70px;
    height: 53px;
}

.mark-valid {
    left: 1398px;
    top: 110px;
    width: 100px;
    height: 137px;
}

.mark-setting {
    left: 870px;
    top: 366px;
    width: 93px;
    height: 50px;
}

.mark-cond {
    left: 880px;
    top: 497px;
    width: 461px;
    height: 321px;
}

.mark-col {
    left: 2312px;
    top: 341px;
    width: 206px;
    height: 1136px;
}
</style>
